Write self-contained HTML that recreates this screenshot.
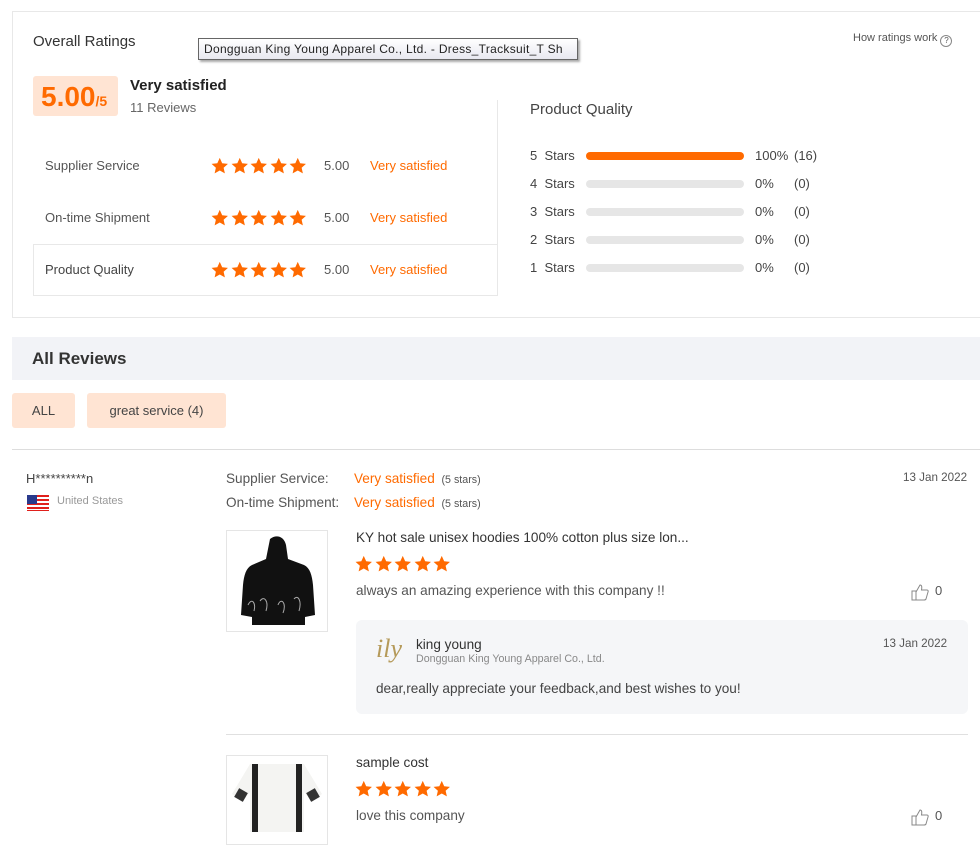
<!DOCTYPE html>
<html><head><meta charset="utf-8"><style>
*{margin:0;padding:0;box-sizing:border-box}
body{width:980px;height:832px;overflow:hidden;background:#fff;font-family:"Liberation Sans",Arial,sans-serif;color:#333;position:relative}
.a{position:absolute;white-space:nowrap}
.st{display:inline-block;width:19.5px;height:18px}
.bar{position:absolute;left:586px;width:158px;height:8px;border-radius:4px;background:#e6e6e6}
.n{transform:scaleX(.97);transform-origin:left top}
</style></head><body>
<svg width="0" height="0" style="position:absolute"><defs><symbol id="s" viewBox="0 0 20 20"><path d="M10 1l2.7 5.9 6.4.7-4.8 4.3 1.4 6.3L10 15l-5.7 3.2 1.4-6.3L.9 7.6l6.4-.7z" fill="#ff6a00"/></symbol></defs></svg>

<div class="a" style="left:12px;top:11px;width:980px;height:307px;border:1px solid #e8e8e8"></div>
<div class="a" style="left:33px;top:33px;font-size:15px;color:#333">Overall Ratings</div>
<div class="a" style="left:198px;top:38px;width:380px;height:22px;border:1px solid #666;background:linear-gradient(#fff,#e8e8f0);box-shadow:2px 2px 2px #aaa;font-size:12px;color:#222;padding:3px 5px;overflow:hidden;letter-spacing:.3px">Dongguan King Young Apparel Co., Ltd. - Dress_Tracksuit_T Sh</div>
<div class="a" style="left:853px;top:32px;font-size:11px;color:#555">How ratings work <span style="display:inline-block;width:12px;height:12px;border:1px solid #888;border-radius:50%;font-size:8px;text-align:center;line-height:10px;vertical-align:-2px">?</span></div>

<div class="a" style="left:33px;top:76px;width:85px;height:40px;background:#ffe4d3;border-radius:3px;color:#ff6a00;font-weight:bold;font-size:28px;padding:5px 0 0 8px">5.00<span style="font-size:14px">/5</span></div>
<div class="a" style="left:130px;top:77px;font-size:15px;font-weight:bold;color:#222">Very satisfied</div>
<div class="a" style="left:130px;top:100px;font-size:13px;color:#666">11 Reviews</div>

<div class="a" style="left:497px;top:100px;width:1px;height:195px;background:#e8e8e8"></div>
<div class="a" style="left:33px;top:244px;width:465px;height:52px;border:1px solid #e8e8e8;border-right:none"></div>

<div class="a" style="left:45px;top:158px;font-size:13px;color:#555">Supplier Service</div>
<div class="a" style="left:45px;top:210px;font-size:13px;color:#555">On-time Shipment</div>
<div class="a" style="left:45px;top:262px;font-size:13px;color:#444">Product Quality</div>
<div class="a" style="left:210px;top:157px"><svg class="st"><use href="#s"/></svg><svg class="st"><use href="#s"/></svg><svg class="st"><use href="#s"/></svg><svg class="st"><use href="#s"/></svg><svg class="st"><use href="#s"/></svg></div>
<div class="a" style="left:210px;top:209px"><svg class="st"><use href="#s"/></svg><svg class="st"><use href="#s"/></svg><svg class="st"><use href="#s"/></svg><svg class="st"><use href="#s"/></svg><svg class="st"><use href="#s"/></svg></div>
<div class="a" style="left:210px;top:261px"><svg class="st"><use href="#s"/></svg><svg class="st"><use href="#s"/></svg><svg class="st"><use href="#s"/></svg><svg class="st"><use href="#s"/></svg><svg class="st"><use href="#s"/></svg></div>
<div class="a" style="left:324px;top:158px;font-size:13px;color:#555">5.00</div>
<div class="a" style="left:324px;top:210px;font-size:13px;color:#555">5.00</div>
<div class="a" style="left:324px;top:262px;font-size:13px;color:#555">5.00</div>
<div class="a" style="left:370px;top:158px;font-size:13px;color:#ff6a00">Very satisfied</div>
<div class="a" style="left:370px;top:210px;font-size:13px;color:#ff6a00">Very satisfied</div>
<div class="a" style="left:370px;top:262px;font-size:13px;color:#ff6a00">Very satisfied</div>

<div class="a" style="left:530px;top:101px;font-size:15px;color:#444">Product Quality</div>
<div class="a" style="left:530px;top:142px;font-size:13px;color:#444;line-height:28px">5&nbsp; Stars<br>4&nbsp; Stars<br>3&nbsp; Stars<br>2&nbsp; Stars<br>1&nbsp; Stars</div>
<div class="bar" style="top:152px;background:#ff6a00"></div>
<div class="bar" style="top:180px"></div>
<div class="bar" style="top:208px"></div>
<div class="bar" style="top:236px"></div>
<div class="bar" style="top:264px"></div>
<div class="a" style="left:755px;top:142px;font-size:13px;color:#444;line-height:28px">100%<br>0%<br>0%<br>0%<br>0%</div>
<div class="a" style="left:794px;top:142px;font-size:13px;color:#444;line-height:28px">(16)<br>(0)<br>(0)<br>(0)<br>(0)</div>

<div class="a" style="left:12px;top:337px;width:968px;height:43px;background:#f2f3f7"></div>
<div class="a" style="left:32px;top:349px;font-size:17px;font-weight:bold;color:#333">All Reviews</div>
<div class="a" style="left:12px;top:393px;width:63px;height:35px;background:#ffe4d3;border-radius:3px;font-size:13px;color:#444;text-align:center;line-height:35px">ALL</div>
<div class="a" style="left:87px;top:393px;width:139px;height:35px;background:#ffe4d3;border-radius:3px;font-size:13px;color:#444;text-align:center;line-height:35px">great service (4)</div>
<div class="a" style="left:12px;top:449px;width:968px;height:1px;background:#ddd"></div>

<div class="a" style="left:26px;top:471px;font-size:13px;color:#444">H**********n</div>
<svg class="a" style="left:27px;top:495px" width="22" height="16" viewBox="0 0 22 16"><rect width="22" height="16" fill="#fff"/><g fill="#e0201c"><rect y="0" width="22" height="2"/><rect y="4" width="22" height="2"/><rect y="8" width="22" height="2"/><rect y="12" width="22" height="2"/><rect y="15" width="22" height="1"/></g><rect width="10" height="9" fill="#2a3a8c"/></svg>
<div class="a" style="left:57px;top:495px;font-size:11px;color:#999">United States</div>

<div class="a n" style="left:226px;top:470px;font-size:14px;color:#555">Supplier Service:</div>
<div class="a n" style="left:226px;top:494px;font-size:14px;color:#555">On-time Shipment:</div>
<div class="a n" style="left:354px;top:470px;font-size:14px;color:#ff6a00">Very satisfied <span style="font-size:11px;color:#555">&nbsp;(5 stars)</span></div>
<div class="a n" style="left:354px;top:494px;font-size:14px;color:#ff6a00">Very satisfied <span style="font-size:11px;color:#555">&nbsp;(5 stars)</span></div>
<div class="a n" style="left:903px;top:470px;font-size:12px;color:#555">13 Jan 2022</div>

<div class="a" style="left:226px;top:530px;width:102px;height:102px;border:1px solid #e5e5e5;background:#fff"></div>
<svg class="a" style="left:238px;top:535px" width="78" height="92" viewBox="0 0 78 92"><path d="M32 4c6-5 14-3 16 6l2 14 16 6c6 3 8 10 9 20l2 30-10 2v8H14v-8L3 80 5 50c1-10 3-17 9-20l14-6z" fill="#111"/><path d="M10 70c4-8 8-2 6 6M22 66c4-6 9 0 6 10M40 70c3-8 9-2 5 8M56 64c4-5 8 2 5 12" stroke="#aaa" fill="none"/></svg>

<div class="a n" style="left:356px;top:529px;font-size:14px;color:#333">KY hot sale unisex hoodies 100% cotton plus size lon...</div>
<div class="a" style="left:354px;top:555px"><svg class="st"><use href="#s"/></svg><svg class="st"><use href="#s"/></svg><svg class="st"><use href="#s"/></svg><svg class="st"><use href="#s"/></svg><svg class="st"><use href="#s"/></svg></div>
<div class="a n" style="left:356px;top:582px;font-size:14px;color:#555">always an amazing experience with this company !!</div>
<svg class="a" style="left:911px;top:583px" width="18" height="18" viewBox="0 0 18 18"><path d="M1 8h4v9H1zM5 9l4-7c2 0 2 2 1.5 5H16c1 0 1.5 1 1 2l-2 7c-.3.7-1 1-2 1H5" fill="none" stroke="#888"/></svg>
<div class="a" style="left:935px;top:583px;font-size:13px;color:#555">0</div>

<div class="a" style="left:356px;top:620px;width:612px;height:94px;background:#f5f6f8;border-radius:6px"></div>
<div class="a" style="left:376px;top:634px;font-size:26px;font-style:italic;font-family:'Liberation Serif',serif;color:#b59a5a">ily</div>
<div class="a n" style="left:416px;top:636px;font-size:14px;color:#333">king young</div>
<div class="a n" style="left:416px;top:653px;font-size:11px;color:#888">Dongguan King Young Apparel Co., Ltd.</div>
<div class="a n" style="left:883px;top:636px;font-size:12px;color:#555">13 Jan 2022</div>
<div class="a n" style="left:376px;top:680px;font-size:14px;color:#444">dear,really appreciate your feedback,and best wishes to you!</div>

<div class="a" style="left:226px;top:734px;width:742px;height:1px;background:#e0e0e0"></div>
<div class="a" style="left:226px;top:755px;width:102px;height:90px;border:1px solid #e5e5e5;background:#fff"></div>
<svg class="a" style="left:230px;top:762px" width="94" height="70" viewBox="0 0 94 70"><path d="M20 2h54l18 30-10 8-8-10v40H20V30l-8 10L2 32z" fill="#f4f4f2"/><rect x="22" y="2" width="6" height="68" fill="#222"/><rect x="66" y="2" width="6" height="68" fill="#222"/><rect x="6" y="28" width="10" height="10" fill="#333" transform="rotate(30 11 33)"/><rect x="78" y="28" width="10" height="10" fill="#333" transform="rotate(-30 83 33)"/></svg>
<div class="a n" style="left:356px;top:754px;font-size:14px;color:#333">sample cost</div>
<div class="a" style="left:354px;top:780px"><svg class="st"><use href="#s"/></svg><svg class="st"><use href="#s"/></svg><svg class="st"><use href="#s"/></svg><svg class="st"><use href="#s"/></svg><svg class="st"><use href="#s"/></svg></div>
<div class="a n" style="left:356px;top:807px;font-size:14px;color:#555">love this company</div>
<svg class="a" style="left:911px;top:808px" width="18" height="18" viewBox="0 0 18 18"><path d="M1 8h4v9H1zM5 9l4-7c2 0 2 2 1.5 5H16c1 0 1.5 1 1 2l-2 7c-.3.7-1 1-2 1H5" fill="none" stroke="#888"/></svg>
<div class="a" style="left:935px;top:808px;font-size:13px;color:#555">0</div>
</body></html>
